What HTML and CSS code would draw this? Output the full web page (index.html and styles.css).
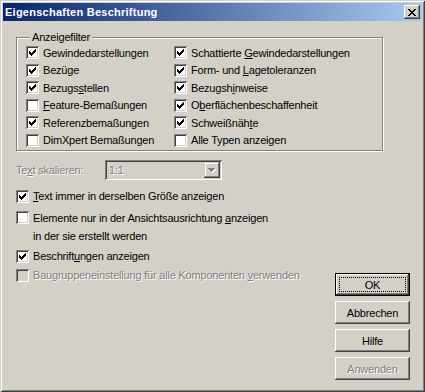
FILE: index.html
```html
<!DOCTYPE html>
<html lang="de">
<head>
<meta charset="utf-8">
<title>Eigenschaften Beschriftung</title>
<link rel="stylesheet" href="styles.css">
</head>
<body>
<svg class="defs" width="0" height="0">
  <defs>
    <symbol id="chk" viewBox="0 0 13 13"><path d="M3 5h1v3H3zM4 6h1v3H4zM5 7h1v3H5zM6 6h1v3H6zM7 5h1v3H7zM8 4h1v3H8zM9 3h1v3H9z" fill="#000"/></symbol>
  </defs>
</svg>
<div class="window">
  <div class="titlebar">
    <span class="title">Eigenschaften Beschriftung</span>
    <span class="close"><svg width="8" height="7" viewBox="0 0 8 7"><path d="M0 0h2v1H0zM6 0h2v1H6zM1 1h2v1H1zM5 1h2v1H5zM2 2h4v1H2zM3 3h2v1H3zM2 4h4v1H2zM1 5h2v1H1zM5 5h2v1H5zM0 6h2v1H0zM6 6h2v1H6z" fill="#000"/></svg></span>
  </div>
  <div class="content">
    <fieldset class="group">
      <legend>Anzeigefilter</legend>
      <div class="grid">
        <label class="cb"><span class="box"><svg width="13" height="13"><use href="#chk"/></svg></span><span>Gewindedarstellungen</span></label>
        <label class="cb"><span class="box"><svg width="13" height="13"><use href="#chk"/></svg></span><span>Schattierte <u>G</u>ewindedarstellungen</span></label>
        <label class="cb"><span class="box"><svg width="13" height="13"><use href="#chk"/></svg></span><span>Bezüge</span></label>
        <label class="cb"><span class="box"><svg width="13" height="13"><use href="#chk"/></svg></span><span>Form- und <u>L</u>agetoleranzen</span></label>
        <label class="cb"><span class="box"><svg width="13" height="13"><use href="#chk"/></svg></span><span>Bezugs<u>s</u>tellen</span></label>
        <label class="cb"><span class="box"><svg width="13" height="13"><use href="#chk"/></svg></span><span>Bezugsh<u>i</u>nweise</span></label>
        <label class="cb"><span class="box"></span><span><u>F</u>eature-Bemaßungen</span></label>
        <label class="cb"><span class="box"><svg width="13" height="13"><use href="#chk"/></svg></span><span>O<u>b</u>erflächenbeschaffenheit</span></label>
        <label class="cb"><span class="box"><svg width="13" height="13"><use href="#chk"/></svg></span><span>Referenzbemaßungen</span></label>
        <label class="cb"><span class="box"><svg width="13" height="13"><use href="#chk"/></svg></span><span>Schweißnäh<u>t</u>e</span></label>
        <label class="cb"><span class="box"></span><span>DimXpert Bemaßungen</span></label>
        <label class="cb"><span class="box"></span><span>Alle Typen anzeigen</span></label>
      </div>
    </fieldset>
    <div class="lower">
      <div class="options">
        <div class="scale-row">
          <span class="label disabled">Te<u>x</u>t skalieren:</span>
          <span class="combo">
            <span class="combo-text disabled">1:1</span>
            <span class="combo-btn"><svg width="8" height="5" viewBox="0 0 8 5"><path d="M1 1h7v1H1zM2 2h5v1H2zM3 3h3v1H3zM4 4h1v1H4z" fill="#fff"/><path d="M0 0h7v1H0zM1 1h5v1H1zM2 2h3v1H2zM3 3h1v1H3z" fill="#808080"/></svg></span>
          </span>
        </div>
        <label class="cb opt opt1"><span class="box"><svg width="13" height="13"><use href="#chk"/></svg></span><span><u>T</u>ext immer in derselben Größe anzeigen</span></label>
        <label class="cb opt opt2"><span class="box"></span><span>Elemente nur in der Ansichtsausrichtung <u>a</u>nzeigen<br>in der sie erstellt werden</span></label>
        <label class="cb opt opt3"><span class="box"><svg width="13" height="13"><use href="#chk"/></svg></span><span>Beschrift<u>u</u>ngen anzeigen</span></label>
        <label class="cb opt opt4"><span class="box off"></span><span class="disabled">Baugruppeneinstellung für alle Komponenten <u>v</u>erwenden</span></label>
      </div>
      <div class="buttons">
        <span class="btn default"><span class="focus">OK</span></span>
        <span class="btn">Abbrechen</span>
        <span class="btn">Hilfe</span>
        <span class="btn disabled">Anwenden</span>
      </div>
    </div>
  </div>
</div>
</body>
</html>
```

FILE: styles.css
```css
* { box-sizing: border-box; }
html, body { margin: 0; padding: 0; }
body {
  background: #d4d0c8;
  font-family: "Liberation Sans", "DejaVu Sans", sans-serif;
  font-size: 11px;
  letter-spacing: -0.2px;
  color: #000;
}
.defs { position: absolute; width: 0; height: 0; overflow: hidden; }
.window {
  width: 425px;
  height: 392px;
  background: #d4d0c8;
  padding: 3px;
  display: flex;
  flex-direction: column;
  box-shadow: inset 1px 1px 0 #d4d0c8, inset -1px -1px 0 #404040, inset 2px 2px 0 #fff, inset -2px -2px 0 #808080;
}
.titlebar {
  height: 18px;
  flex: none;
  background: linear-gradient(to right, #0a246a, #a6caf0);
  display: flex;
  align-items: center;
  justify-content: space-between;
  padding: 0 2px 0 2px;
  color: #fff;
  font-weight: bold;
  font-size: 11px;
  letter-spacing: 0.25px;
}
.close {
  width: 16px;
  height: 14px;
  background: #d4d0c8;
  display: flex;
  align-items: center;
  justify-content: center;
  box-shadow: inset -1px -1px 0 #404040, inset 1px 1px 0 #fff, inset -2px -2px 0 #808080;
}
.close svg { display: block; }
.content {
  flex: 1;
  display: flex;
  flex-direction: column;
  padding: 10px 12px 0 13px;
}
.group {
  width: 367px;
  margin: 0;
  padding: 0 0 1px 9px;
  border: 1px solid #808080;
  box-shadow: 1px 1px 0 #fff, inset 1px 1px 0 #fff;
}
.group legend {
  margin-left: 4px;
  padding: 0 2px;
  line-height: 13px;
  background: #d4d0c8;
}
.grid {
  display: grid;
  grid-template-columns: 148px 1fr;
  grid-auto-rows: 17.5px;
}
.cb {
  display: flex;
  align-items: center;
  gap: 4px;
  white-space: nowrap;
}
.box {
  width: 13px;
  height: 13px;
  flex: none;
  background: #fff;
  box-shadow: inset 1px 1px 0 #808080, inset -1px -1px 0 #fff, inset 2px 2px 0 #404040, inset -2px -2px 0 #d4d0c8;
}
.box svg { display: block; }
.box.off { background: #d4d0c8; }
.disabled { color: #808080; text-shadow: 1px 1px 0 #fff; }
.lower {
  display: flex;
  align-items: flex-start;
  margin-top: 9px;
}
.options {
  flex: 1;
  display: flex;
  flex-direction: column;
}
.scale-row {
  display: flex;
  align-items: center;
  height: 20px;
}
.label { width: 89px; flex: none; }
.combo {
  width: 117px;
  height: 20px;
  display: flex;
  align-items: center;
  justify-content: space-between;
  padding: 2px 2px 2px 4px;
  box-shadow: inset 1px 1px 0 #808080, inset -1px -1px 0 #fff, inset 2px 2px 0 #404040, inset -2px -2px 0 #d4d0c8;
}
.combo-btn {
  width: 16px;
  height: 16px;
  display: flex;
  align-items: center;
  justify-content: center;
  box-shadow: inset -1px -1px 0 #404040, inset 1px 1px 0 #d4d0c8, inset -2px -2px 0 #808080, inset 2px 2px 0 #fff;
}
.combo-btn svg { display: block; }
.opt { height: 18px; }
.opt1 { margin-top: 7px; }
.opt2 { margin-top: 4px; height: 36px; align-items: flex-start; line-height: 18px; }
.opt2 .box { margin-top: 2px; }
.opt3 { margin-top: 2px; }
.opt4 { margin-top: 1px; }
.buttons {
  display: flex;
  flex-direction: column;
  gap: 5px;
  margin-top: 113px;
}
.btn {
  width: 75px;
  height: 23px;
  display: flex;
  align-items: center;
  justify-content: center;
  box-shadow: inset -1px -1px 0 #404040, inset 1px 1px 0 #fff, inset -2px -2px 0 #808080;
}
.btn.default {
  padding: 4px;
  box-shadow: inset 0 0 0 1px #000, inset -2px -2px 0 #404040, inset 2px 2px 0 #fff, inset -3px -3px 0 #808080;
}
.focus {
  flex: 1;
  align-self: stretch;
  display: flex;
  align-items: center;
  justify-content: center;
  border: 1px dotted #000;
}
```
